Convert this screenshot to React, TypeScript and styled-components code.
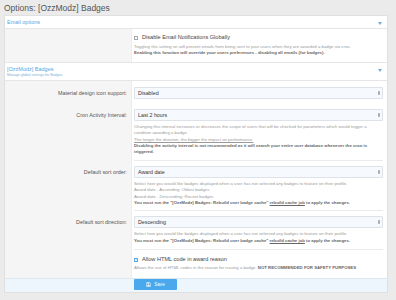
import React from "react";
import styled, { createGlobalStyle } from "styled-components";

const GlobalStyle = createGlobalStyle`
  html, body { margin: 0; padding: 0; background: #ebebeb; }
  body { font-family: "Liberation Sans", Arial, sans-serif; color: #141414; -webkit-font-smoothing: antialiased; }
  * { box-sizing: border-box; }
`;

const Page = styled.div`
  padding: 2px 8px 0 4px;
  background: #ebebeb;
  min-height: 300px;
`;

const Title = styled.h1`
  margin: 0;
  height: 13px;
  font-size: 8.5px;
  line-height: 12px;
  font-weight: 400;
  color: #555;
`;

const Block = styled.div`
  background: #fff;
  border: 1px solid #e0e0e0;
  border-bottom: none;
`;

const BlockHeader = styled.div<{ $tall?: boolean }>`
  display: flex;
  justify-content: space-between;
  align-items: flex-start;
  padding: 3px 5px 3px 2px;
  height: ${(p) => (p.$tall ? "19px" : "13px")};
  border-bottom: 1px solid #e6e6e6;
  ${(p) => (p.$tall ? "border-top: 1px solid #e6e6e6;" : "")}
`;

const HeaderText = styled.div`
  display: flex;
  flex-direction: column;
`;

const HeaderTitle = styled.span`
  color: #53a8e8;
  font-size: 5.5px;
  line-height: 7px;
`;

const HeaderDesc = styled.span`
  color: #7fb0d8;
  font-size: 3.6px;
  line-height: 5px;
`;

const Caret = styled.svg`
  width: 4px;
  height: 3px;
  margin-top: 3px;
  fill: #6aaee2;
`;

const Row = styled.div`
  display: flex;
`;

const Label = styled.div<{ $pt?: number }>`
  width: 127px;
  flex: none;
  background: #f5f5f5;
  border-right: 1px solid #ededed;
  text-align: right;
  padding: ${(p) => p.$pt ?? 6}px 4px 0 0;
  font-size: 5.4px;
  line-height: 12px;
  color: #555;
`;

const Control = styled.div<{ $sep?: boolean; $pt?: number; $pb?: number }>`
  flex: 1;
  margin: 0 4px 0 2px;
  padding: ${(p) => p.$pt ?? 6}px 0 ${(p) => p.$pb ?? 5}px 0;
  ${(p) => (p.$sep ? "border-top: 1px solid #ebebeb;" : "")}
`;

const Select = styled.div`
  display: flex;
  align-items: center;
  justify-content: space-between;
  height: 12px;
  padding: 0 2px 0 3px;
  background: #f6f9fd;
  border: 1px solid #dde2e8;
  border-radius: 1px;
  font-size: 5.3px;
  color: #333;
`;

const Arrows = styled.svg`
  width: 2px;
  height: 4px;
  fill: #444;
`;

const Explain = styled.div<{ $mt?: number }>`
  margin-top: ${(p) => p.$mt ?? 3}px;
  font-size: 4.3px;
  line-height: 6.4px;
  color: #9a9a9a;
`;

const Strong = styled.span`
  font-weight: 700;
  color: #666;
`;

const Under = styled.span<{ $bold?: boolean }>`
  text-decoration: underline;
  ${(p) => (p.$bold ? "font-weight: 700; color: #666;" : "")}
`;

const CheckLine = styled.label`
  display: flex;
  align-items: center;
  gap: 4px;
  font-size: 5.6px;
  line-height: 7px;
  color: #444;
`;

const Box = styled.span<{ $checked?: boolean }>`
  width: 4px;
  height: 4px;
  border: 0.8px solid ${(p) => (p.$checked ? "#5aa9e6" : "#a5a5a5")};
  border-radius: 0.5px;
  display: inline-flex;
  align-items: center;
  justify-content: center;
  background: #fff;
`;

const Footer = styled.div`
  display: flex;
  background: #eef6fd;
  border: 1px solid #e0e0e0;
  border-top: 1px solid #dde7f0;
  padding: 0 0 2px 129px;
  height: 15px;
`;

const Button = styled.button`
  display: inline-flex;
  align-items: center;
  justify-content: center;
  gap: 3px;
  width: 43px;
  height: 11px;
  border: none;
  border-radius: 1px;
  background: #4aa8ec;
  color: #fff;
  font-family: inherit;
  font-size: 4.6px;
  padding: 0;
`;

const SaveIcon = styled.svg`
  width: 5px;
  height: 5px;
`;

const Toggle = () => (
  <Caret viewBox="0 0 4 3">
    <path d="M0 0 L4 0 L2 3 Z" />
  </Caret>
);

const Sel = ({ value }: { value: string }) => (
  <Select>
    <span>{value}</span>
    <Arrows viewBox="0 0 2 4">
      <path d="M0 1.6 L1 0 L2 1.6 Z M0 2.4 L2 2.4 L1 4 Z" />
    </Arrows>
  </Select>
);

export default function App() {
  return (
    <>
      <GlobalStyle />
      <Page>
        <Title>Options: [OzzModz] Badges</Title>
        <Block>
          <BlockHeader>
            <HeaderTitle>Email options</HeaderTitle>
            <Toggle />
          </BlockHeader>
          <Row>
            <Label />
            <Control $pt={5} $pb={5}>
              <CheckLine>
                <Box />
                Disable Email Notifications Globally
              </CheckLine>
              <Explain $mt={3}>
                Toggling this setting on will prevent emails from being sent to your users when they are awarded a badge via cron.
                <br />
                <Strong>Enabling this function will override your users preferences - disabling all emails (for badges).</Strong>
              </Explain>
            </Control>
          </Row>
          <BlockHeader $tall>
            <HeaderText>
              <HeaderTitle>[OzzModz] Badges</HeaderTitle>
              <HeaderDesc>Manage global settings for Badges.</HeaderDesc>
            </HeaderText>
            <Toggle />
          </BlockHeader>
          <Row>
            <Label>Material design icon support:</Label>
            <Control $pt={6} $pb={4}>
              <Sel value="Disabled" />
            </Control>
          </Row>
          <Row>
            <Label>Cron Activity Interval:</Label>
            <Control $pt={6} $pb={4}>
              <Sel value="Last 2 hours" />
              <Explain>
                Changing this interval increases or decreases the scope of users that will be checked for parameters which would trigger a condition awarding a badge.
                <br />
                <Under>The longer the duration, the bigger the impact on performance.</Under>
                <br />
                <Strong>Disabling the activity interval is not recommended as it will search your entire user database whenever the cron is triggered.</Strong>
              </Explain>
            </Control>
          </Row>
          <Row>
            <Label>Default sort order:</Label>
            <Control $sep $pt={5} $pb={4}>
              <Sel value="Award date" />
              <Explain>
                Select how you would like badges displayed when a user has not selected any badges to feature on their profile.
                <br />
                Award date - Ascending: Oldest badges
                <br />
                Award date - Descending: Recent badges
                <br />
                <Strong>
                  You must run the "[OzzModz] Badges: Rebuild user badge cache" <Under $bold>rebuild cache job</Under> to apply the changes.
                </Strong>
              </Explain>
            </Control>
          </Row>
          <Row>
            <Label>Default sort direction:</Label>
            <Control $sep $pt={5} $pb={5}>
              <Sel value="Descending" />
              <Explain>
                Select how you would like badges displayed when a user has not selected any badges to feature on their profile.
                <br />
                <Strong>
                  You must run the "[OzzModz] Badges: Rebuild user badge cache" <Under $bold>rebuild cache job</Under> to apply the changes.
                </Strong>
              </Explain>
            </Control>
          </Row>
          <Row>
            <Label />
            <Control $sep $pt={6} $pb={6}>
              <CheckLine>
                <Box $checked>
                  <svg width="3" height="3" viewBox="0 0 3 3">
                    <path d="M0.4 1.5 L1.2 2.3 L2.6 0.7" stroke="#5aa9e6" strokeWidth="0.6" fill="none" />
                  </svg>
                </Box>
                Allow HTML code in award reason
              </CheckLine>
              <Explain $mt={2}>
                Allows the use of HTML codes in the reason for issuing a badge. <Strong>NOT RECOMMENDED FOR SAFETY PURPOSES</Strong>
              </Explain>
            </Control>
          </Row>
        </Block>
        <Footer>
          <Button>
            <SaveIcon viewBox="0 0 10 10">
              <path d="M1 1 H7.5 L9 2.5 V9 H1 Z" fill="none" stroke="#fff" strokeWidth="1" />
              <rect x="3" y="1.5" width="3.5" height="2.2" fill="#fff" />
              <rect x="2.8" y="5.5" width="4.4" height="3" fill="#fff" />
            </SaveIcon>
            Save
          </Button>
        </Footer>
      </Page>
    </>
  );
}
